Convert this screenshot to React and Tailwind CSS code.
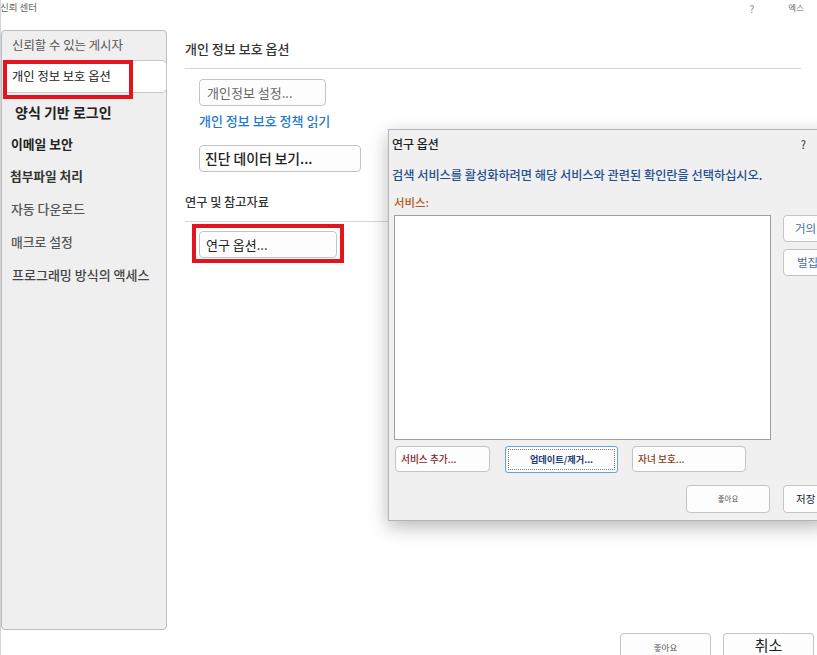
import React from "react";

const font = { fontFamily: '"Noto Sans CJK KR", "Noto Sans", sans-serif' };

function SideItem({ children, className = "", h = "h-[33px]" }) {
  return (
    <div className={`${h} flex items-center whitespace-nowrap ${className}`}>{children}</div>
  );
}

function Btn({ children, className = "" }) {
  return (
    <div
      className={`flex shrink-0 items-center whitespace-nowrap rounded-[4px] border border-[#c4c4c4] bg-[#fdfdfd] ${className}`}
    >
      {children}
    </div>
  );
}

export default function App() {
  return (
    <div
      style={font}
      className="relative w-[817px] h-[655px] overflow-hidden bg-white border-l border-[#d4d4d4]"
    >
      {/* title bar */}
      <div className="h-[29px] flex items-start pt-[1px]">
        <div className="text-[9.5px] text-[#666] -ml-[1px] leading-[13px]">신뢰 센터</div>
        <div className="ml-auto text-[10px] text-[#888] leading-[13px] mr-[34px] mt-[1px]">?</div>
        <div className="text-[8.5px] text-[#666] leading-[13px] mr-[13px]">엑스</div>
      </div>

      <div className="flex">
        {/* sidebar */}
        <div className="relative shrink-0 w-[166px] h-[600px] mt-[1px] bg-[#efefef] border border-[#bdbdbd] rounded-[4px]">
          <SideItem h="h-[29px]" className="pl-[10px] text-[12.4px] text-[#555]">
            신뢰할 수 있는 게시자
          </SideItem>
          <SideItem h="h-[33px]" className="ml-[1px] -mr-[1px] pl-[8px] bg-white border border-[#c9c9c9] rounded-r-[5px] text-[12.3px] text-[#222]">
            개인 정보 보호 옵션
          </SideItem>
          <SideItem className="pl-[13px] pt-[5px] text-[14px] font-bold text-[#222]">
            양식 기반 로그인
          </SideItem>
          <SideItem className="pl-[9px] pt-[2px] text-[12.8px] font-semibold text-[#222]">
            이메일 보안
          </SideItem>
          <SideItem className="pl-[8px] text-[12.7px] font-semibold text-[#333]">
            첨부파일 처리
          </SideItem>
          <SideItem className="pl-[9px] text-[12.9px] font-medium text-[#555]">
            자동 다운로드
          </SideItem>
          <SideItem className="pl-[9px] text-[12.8px] font-medium text-[#555]">
            매크로 설정
          </SideItem>
          <SideItem className="pl-[10px] text-[13px] font-medium text-[#444]">
            프로그래밍 방식의 액세스
          </SideItem>
          {/* red annotation */}
          <div className="absolute left-[1px] top-[29px] w-[130px] h-[39px] border-[4px] border-[#e3141d]" />
        </div>

        {/* main */}
        <div className="flex-1 pl-[18px] pt-[11px]">
          <div className="text-[13px] font-medium text-[#333] leading-[18px] whitespace-nowrap">
            개인 정보 보호 옵션
          </div>
          <div className="mt-[10px] mr-[16px] h-px bg-[#d6d6d6]" />
          <Btn className="ml-[14px] mt-[10px] w-[127px] h-[27px] pl-[7px] text-[13px] text-[#666]">
            개인정보 설정...
          </Btn>
          <div className="ml-[14px] mt-[6px] text-[13px] font-medium text-[#1f7bc9] leading-[18px] whitespace-nowrap">
            개인 정보 보호 정책 읽기
          </div>
          <Btn className="ml-[14px] mt-[15px] w-[162px] h-[27px] pl-[5px] text-[13.8px] font-medium text-[#222]">
            진단 데이터 보기...
          </Btn>
          <div className="mt-[21px] text-[12.2px] font-medium text-[#333] leading-[18px] whitespace-nowrap">
            연구 및 참고자료
          </div>
          <div className="mt-[10px] mr-[16px] h-px bg-[#d6d6d6]" />
          <div className="ml-[7px] mt-[2px] inline-block border-[4px] border-[#e3141d] p-[3px] pb-[1px]">
            <Btn className="w-[138px] h-[27px] pl-[6px] text-[13px] text-[#222]">
              연구 옵션...
            </Btn>
          </div>
        </div>
      </div>

      {/* bottom buttons */}
      <div className="flex justify-end gap-[12px] mt-[3px] mr-[3px]">
        <Btn className="w-[91px] h-[28px] justify-center text-[8.5px] leading-none text-[#555] border-[#999]">
          좋아요
        </Btn>
        <Btn className="w-[91px] h-[23px] !items-start justify-center pt-[3px] text-[15px] leading-none text-[#222] border-[#999] border-b-0 rounded-b-none">
          취소
        </Btn>
      </div>

      {/* dialog */}
      <div className="absolute left-[387px] top-[129px] w-[440px] h-[392px] bg-[#f0f0f0] border border-[#b4b4b4] shadow-[0_6px_18px_rgba(0,0,0,0.28)] flex flex-col">
        <div className="flex items-center h-[28px] pl-[3px] pr-[21px]">
          <div className="text-[12px] font-medium text-[#222]">연구 옵션</div>
          <div className="ml-auto text-[11px] text-[#222]">?</div>
        </div>
        <div className="mt-[8px] pl-[3px] text-[12.2px] font-medium text-[#1f4f91] leading-[18px] whitespace-nowrap">
          검색 서비스를 활성화하려면 해당 서비스와 관련된 확인란을 선택하십시오.
        </div>
        <div className="mt-[10px] pl-[5px] text-[11.4px] font-medium text-[#b05a22] leading-[16px]">
          서비스:
        </div>
        <div className="flex mt-[5px]">
          <div className="shrink-0 ml-[5px] w-[377px] h-[225px] bg-white border border-[#9e9e9e]" />
          <div className="shrink-0 ml-[12px] flex flex-col gap-[7px]">
            <Btn className="w-[50px] h-[27px] pl-[11px] text-[11.5px] text-[#4a6fa0]">거의</Btn>
            <Btn className="w-[50px] h-[27px] pl-[13px] text-[11.5px] text-[#4a6fa0]">벌집</Btn>
          </div>
        </div>
        <div className="flex mt-[6px] ml-[6px]">
          <Btn className="w-[95px] h-[26px] pl-[5px] text-[9.7px] font-medium text-[#7b1c1c]">
            서비스 추가...
          </Btn>
          <div className="shrink-0 ml-[15px] w-[113px] h-[27px] rounded-[3px] border border-[#6aa0dc] bg-[#fdfdfd] p-[2px]">
            <div className="w-full h-full border border-dotted border-[#777] flex items-center justify-center text-[9.2px] font-semibold text-[#1f3c78] whitespace-nowrap">
              업데이트/제거...
            </div>
          </div>
          <Btn className="ml-[14px] w-[114px] h-[26px] pl-[5px] text-[9.7px] font-medium text-[#8a3b12]">
            자녀 보호...
          </Btn>
        </div>
        <div className="flex mt-[12px] ml-[297px] gap-[13px]">
          <Btn className="w-[84px] h-[28px] justify-center text-[7.5px] text-[#555]">좋아요</Btn>
          <Btn className="w-[50px] h-[28px] pl-[12px] text-[10.5px] text-[#223]">저장</Btn>
        </div>
      </div>
    </div>
  );
}
